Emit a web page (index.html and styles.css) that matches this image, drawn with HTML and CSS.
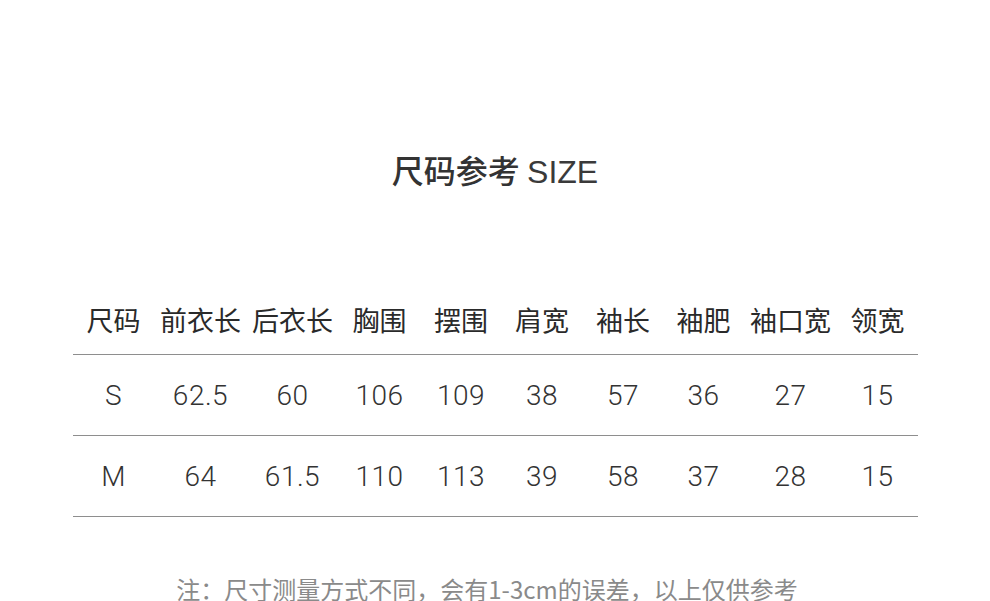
FILE: index.html
```html
<!DOCTYPE html>
<html lang="zh">
<head>
<meta charset="utf-8">
<title>尺码参考 SIZE</title>
<link rel="stylesheet" href="styles.css">
</head>
<body>
<div class="page">
  <h1 class="title">尺码参考 <span class="latin">SIZE</span></h1>
  <div class="table">
    <div class="row head">
      <div class="cell">尺码</div>
      <div class="cell">前衣长</div>
      <div class="cell">后衣长</div>
      <div class="cell">胸围</div>
      <div class="cell">摆围</div>
      <div class="cell">肩宽</div>
      <div class="cell">袖长</div>
      <div class="cell">袖肥</div>
      <div class="cell">袖口宽</div>
      <div class="cell">领宽</div>
    </div>
    <div class="row data">
      <div class="cell">S</div>
      <div class="cell">62.5</div>
      <div class="cell">60</div>
      <div class="cell">106</div>
      <div class="cell">109</div>
      <div class="cell">38</div>
      <div class="cell">57</div>
      <div class="cell">36</div>
      <div class="cell">27</div>
      <div class="cell">15</div>
    </div>
    <div class="row data">
      <div class="cell">M</div>
      <div class="cell">64</div>
      <div class="cell">61.5</div>
      <div class="cell">110</div>
      <div class="cell">113</div>
      <div class="cell">39</div>
      <div class="cell">58</div>
      <div class="cell">37</div>
      <div class="cell">28</div>
      <div class="cell">15</div>
    </div>
  </div>
  <p class="note">注：尺寸测量方式不同，会有1-3cm的误差，以上仅供参考</p>
</div>
</body>
</html>
```

FILE: styles.css
```css
html, body {
  margin: 0;
  padding: 0;
  background: #ffffff;
}
.page {
  width: 990px;
  height: 601px;
  overflow: hidden;
  display: flex;
  flex-direction: column;
  align-items: center;
  font-family: "Noto Sans CJK SC", sans-serif;
  color: #333333;
}
.title {
  margin: 147px 0 0 0;
  height: 44px;
  line-height: 44px;
  font-size: 32px;
  font-weight: 500;
  color: #333333;
  padding-left: 0;
}
.title .latin {
  font-family: "Liberation Sans", sans-serif;
  font-weight: 400;
  letter-spacing: 0;
  color: #3a3a3a;
}
.table {
  margin-top: 97px;
  width: 845px;
  display: flex;
  flex-direction: column;
}
.row {
  display: grid;
  grid-template-columns: 82px 92px 92px 82px 81px 81px 81px 80px 94px 80px;
  align-items: center;
  border-bottom: 1px solid #8e8e8e;
}
.cell {
  text-align: center;
  white-space: nowrap;
}
.head {
  height: 62px;
  padding-bottom: 4px;
  font-family: "Noto Sans CJK SC", sans-serif;
  font-size: 27px;
  font-weight: 400;
  color: #2a2a2a;
}
.data {
  height: 80px;
  font-family: "Roboto", "Liberation Sans", sans-serif;
  font-weight: 300;
  font-size: 28px;
  letter-spacing: 0.5px;
  color: #333333;
}
.note {
  margin: 57px 0 0 0;
  padding-right: 16px;
  line-height: 30px;
  font-size: 24px;
  color: #8a8a8a;
  white-space: nowrap;
}
```
